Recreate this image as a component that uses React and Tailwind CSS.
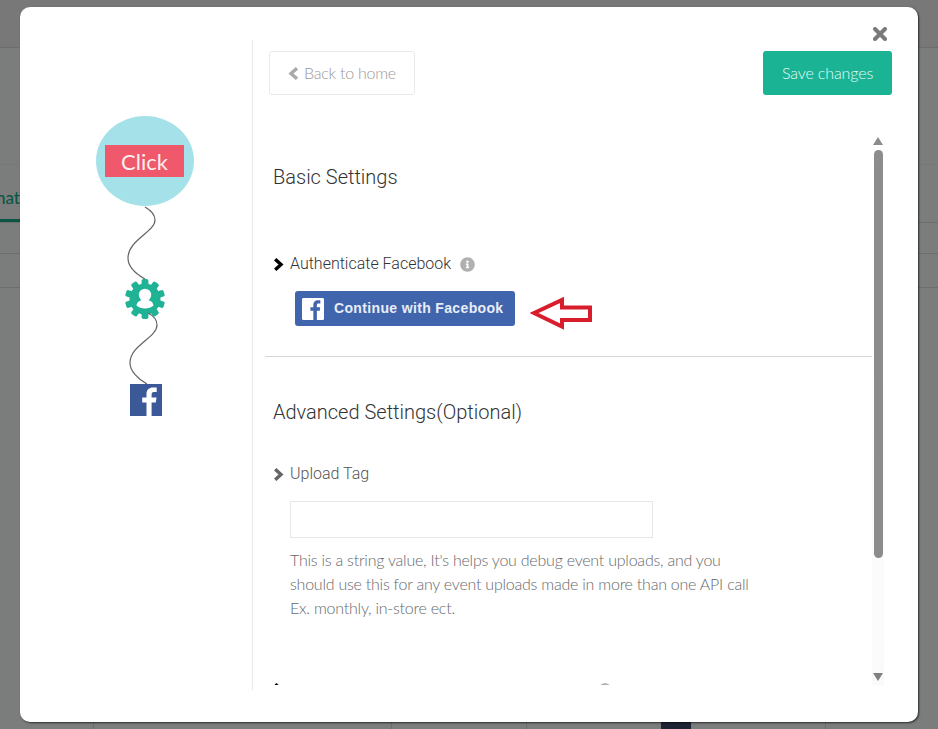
import React from "react";
import { FaInfoCircle } from "react-icons/fa";

const lato = "font-['Lato',sans-serif]";
const roboto = "font-['Roboto',sans-serif]";

function FacebookF({ fill }) {
  return <path fill={fill} d="M21.6 32V18.6h4.2l.7-5h-4.9v-3.1c0-1.5.5-2.4 2.5-2.4h2.6V3.6c-.5-.1-2-.2-3.8-.2-3.8 0-6.4 2.3-6.4 6.5v3.7h-4.3v5h4.3V32z" />;
}

function Chevron({ left, color }) {
  return (
    <svg width="11" height="13" viewBox="0 0 11 13" fill="none" className="shrink-0">
      <path d={left ? "M9 1.200 3 6.500 9 11.800" : "M2.200 1.200 8 6.500 2.200 11.800"} stroke={color} strokeWidth="3.400" />
    </svg>
  );
}

function Gear() {
  const teeth = Array.from({ length: 10 }, (_, i) => i * 36);
  return (
    <svg width="40" height="40" viewBox="0 0 40 40" className="block">
      {teeth.map((a) => (
        <rect key={a} x="16.600" y="0" width="6.800" height="10" rx="1.800" fill="#1fb295" transform={`rotate(${a} 20 20)`} />
      ))}
      <circle cx="20" cy="20" r="15.500" fill="#1fb295" />
      <circle cx="20" cy="16" r="6.200" fill="#fff" />
      <path fill="#fff" d="M11.500 26.500c.2-3.200 3-4.700 5.500-5.500v-3h6v3c2.500.8 5.300 2.300 5.500 5.500-2 1.900-5 3-8.500 3s-6.500-1.100-8.500-3z" />
    </svg>
  );
}

function Squiggle({ d, h }) {
  return (
    <svg width="40" height={h} viewBox={`0 0 40 ${h}`} fill="none" className="block">
      <path d={d} stroke="#5f6368" strokeWidth="1.200" />
    </svg>
  );
}

function Flow() {
  return (
    <div className="w-[232px] shrink-0 pt-[76px] pl-[76px]">
      <div className="flex h-[90px] w-[98px] items-center justify-center rounded-[50%] bg-[#a5e1e9] pr-[1px]">
        <div className={`flex h-[32px] w-[79px] items-center justify-center bg-[#ef596b] text-[22px] text-[#fbeef0] ${lato}`}>Click</div>
      </div>
      <div className="ml-[29px]">
        <Squiggle h={73} d="M20 1C27 5 30 9 30 14 30 26 3 34 3 52 3 61 11 68 20 73" />
        <Gear />
        <div className="-mt-[6px]">
          <Squiggle h={71} d="M23 0C29 3 32 8 32 12 32 25 5 32 5 50 5 58 13 66 22 71" />
        </div>
        <svg width="32" height="32" viewBox="0 0 32 32" className="ml-[5px] block">
          <rect width="32" height="32" fill="#3b5998" />
          <FacebookF fill="#fff" />
        </svg>
      </div>
    </div>
  );
}

function RowTitle({ children, muted, info }) {
  return (
    <div className={`flex h-[24px] items-center text-[16px] font-light ${roboto} ${muted ? "text-[#555]" : "text-[#333]"}`}>
      <Chevron color={muted ? "#666" : "#000"} />
      <span className="ml-[6px]">{children}</span>
      {info && <FaInfoCircle className="ml-[9px] h-[15px] w-[15px] text-[#b0b0b0]" />}
    </div>
  );
}

function FacebookButton() {
  return (
    <div className="mt-[15px] ml-[22px] flex h-[35px] w-[220px] items-center rounded-[3px] bg-[#4065ad] pl-[7px]">
      <svg width="22" height="22" viewBox="0 0 32 32" className="shrink-0">
        <rect width="32" height="32" rx="2" fill="#fff" />
        <FacebookF fill="#4065ad" />
      </svg>
      <span className="ml-[10px] font-['Liberation_Sans',sans-serif] text-[14px] font-bold tracking-[0.35px] text-[#e8edf7]">Continue with Facebook</span>
    </div>
  );
}

function RedArrow() {
  return (
    <svg width="64" height="34" viewBox="0 0 64 34" className="mt-[20px] ml-[15px] shrink-0" fill="none">
      <path d="M4 17 32 4V11.500H60V24H32V30.500Z" stroke="#d81e2c" strokeWidth="4" />
    </svg>
  );
}

function Scrollbar() {
  return (
    <div className="flex w-[12px] shrink-0 flex-col items-center bg-gradient-to-b from-white to-[#fafafa]">
      <div className="mt-[1px] h-0 w-0 border-x-[5px] border-b-[8px] border-x-transparent border-b-[#8c8c8c]" />
      <div className="mt-[5px] h-[408px] w-[9px] rounded-full bg-[#8c8c8c]" />
      <div className="mt-[115px] h-0 w-0 border-x-[5px] border-t-[8px] border-x-transparent border-t-[#808080]" />
    </div>
  );
}

function Settings() {
  return (
    <div className="flex h-[549px] overflow-hidden pl-[12px]">
      <div className="w-[607px] shrink-0">
        <h2 className={`mt-[27px] pl-[8px] text-[20px] leading-[28px] font-light text-[#333] ${roboto}`}>Basic Settings</h2>
        <div className="mt-[61px] pl-[8px]">
          <RowTitle info>Authenticate Facebook</RowTitle>
        </div>
        <div className="flex h-[81px] items-start pl-[8px]">
          <FacebookButton />
          <RedArrow />
        </div>
        <div className="mt-[-1px] h-px bg-[#d6d6d6]" />
        <h2 className={`mt-[41px] pl-[8px] text-[20px] leading-[28px] font-light text-[#333] ${roboto}`}>Advanced Settings(Optional)</h2>
        <div className="mt-[36px] pl-[8px]">
          <RowTitle muted>Upload Tag</RowTitle>
        </div>
        <div className="mt-[15px] ml-[25px] h-[37px] w-[363px] border border-[#e5e6e7]" />
        <p className={`mt-[10px] ml-[25px] w-[480px] text-[16px] leading-[24px] font-light tracking-[-0.23px] text-[#66686b] ${lato}`}>
          This is a string value, It's helps you debug event uploads, and you
          <br />
          should use this for any event uploads made in more than one API call
          <br />
          Ex. monthly, in-store ect.
        </p>
        <div className="mt-[63px] flex h-[14px] items-start pl-[8px]">
          <Chevron color="#000" />
          <FaInfoCircle className="ml-[314px] h-[14px] w-[14px] text-[#b0b0b0]" />
        </div>
      </div>
      <Scrollbar />
    </div>
  );
}

function Modal() {
  return (
    <div className="absolute top-[7px] left-[20px] flex h-[715px] w-[898px] items-start rounded-[10px] bg-white pt-[33px] shadow-[1px_1px_2px_rgba(0,0,0,0.65)]">
      <svg width="14" height="14" viewBox="0 0 14 14" className="absolute top-[20px] right-[31px]">
        <path d="M2 2 12 12M12 2 2 12" stroke="#7a7a7a" strokeWidth="4" strokeLinecap="round" />
      </svg>
      <Flow />
      <div className="h-[650px] w-[666px] border-l border-[#e7eaec]">
        <div className="flex h-[96px] items-start justify-between pt-[11px] pr-[26px] pl-[16px]">
          <div className={`flex h-[44px] w-[146px] items-center justify-center gap-[5px] rounded-[3px] border border-[#e7eaec] text-[16px] font-light tracking-[-0.25px] text-[#999] ${lato}`}>
            <Chevron left color="#aaa" />
            Back to home
          </div>
          <div className={`flex h-[44px] w-[129px] items-center justify-center rounded-[3px] bg-[#1ab394] text-[16px] font-light tracking-[-0.12px] text-[#e6fbf6] ${lato}`}>Save changes</div>
        </div>
        <Settings />
      </div>
    </div>
  );
}

function PageBehind() {
  return (
    <div className="h-[729px] w-[938px] overflow-hidden bg-[#7b7d7c]">
      <div className="h-[48px] border-b border-[#6c6e6d] bg-[#787878]" />
      <div className="h-[117px] border-b border-[#777978]" />
      <div className="flex h-[58px] items-end overflow-hidden border-b border-[#6c6e6d]">
        <div className="relative h-[57px] w-[20px] shrink-0 overflow-hidden border-b-[3px] border-[#0c5544]">
          <span className={`absolute top-[20px] right-0 text-[17px] font-medium whitespace-nowrap text-[#0c5544] ${lato}`}>nat</span>
        </div>
      </div>
      <div className="h-[31px] border-b border-[#6c6e6d]" />
      <div className="h-[34px] border-b border-[#6c6e6d]" />
      <div className="mt-[434px] flex h-[8px]">
        <div className="ml-[93px] w-[299px] border-x border-[#6c6e6d]" />
        <div className="w-[135px] border-r border-[#6c6e6d]" />
        <div className="w-[299px] border-r border-[#6c6e6d] pl-[134px]">
          <div className="h-full w-[30px] bg-[#1c2333]" />
        </div>
      </div>
    </div>
  );
}

export default function App() {
  return (
    <div className="relative h-[729px] w-[938px] overflow-hidden">
      <PageBehind />
      <Modal />
    </div>
  );
}
